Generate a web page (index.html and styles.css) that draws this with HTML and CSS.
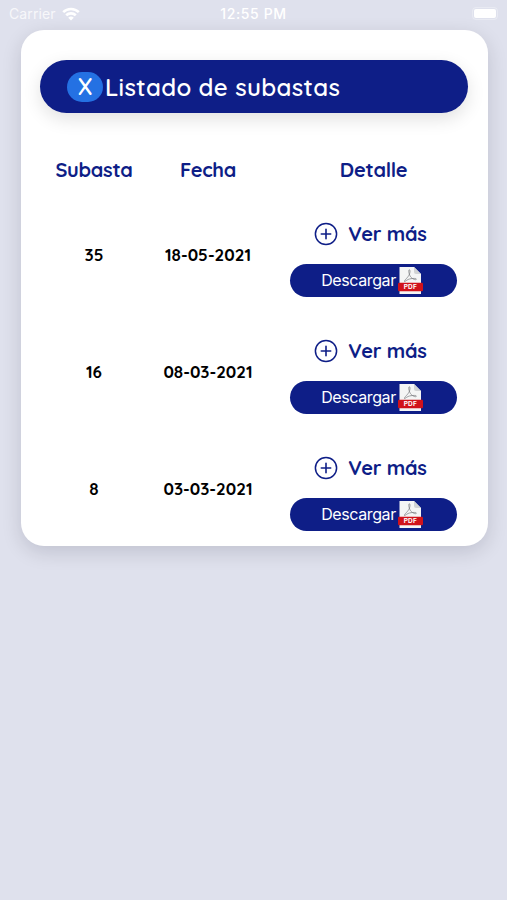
FILE: index.html
```html
<!DOCTYPE html>
<html lang="es">
<head>
    <meta charset="UTF-8">
    <meta name="viewport" content="width=device-width, initial-scale=1">
    <title>Listado de subastas</title>
    <link rel="stylesheet" href="styles.css">
</head>
<body>

<!-- iconos compartidos por todas las filas -->
<svg class="sprites">
    <symbol id="icon-plus" viewBox="0 0 24 24">
        <circle cx="12" cy="12" r="10.6" fill="none" stroke="currentColor" stroke-width="1.5"/>
        <path d="M12 7.300v9.400M7.300 12h9.400" fill="none" stroke="currentColor" stroke-width="1.6" stroke-linecap="round"/>
    </symbol>
    <symbol id="icon-pdf" viewBox="0 0 25 27">
        <path d="M1.500 0h14.500l7 7V27H1.500z" fill="#f4f5f5"/>
        <path d="M16 0l7 7h-5q-2 0-2-2z" fill="#d0d2d4"/>
        <path d="M6.500 14.500c-.5-1.500 3.500-3.500 5-7.500.8-2.300.6-4.300-.2-4.300-1 0-.6 3.800 1 6.600 1.400 2.500 5.400 4.200 6 3 .5-1.300-5.200-1.100-8.200.2-2 .8-3.200 2.400-3.600 2z" fill="none" stroke="#77797c" stroke-width=".7"/>
        <rect x="0" y="15.800" width="25" height="8.400" rx="1.200" fill="#d0121b"/>
        <text x="12.300" y="22.400" class="pdf-text" text-anchor="middle">PDF</text>
    </symbol>
</svg>

<div class="status-bar">
    <div class="carrier">
        <span>Carrier</span>
        <svg class="wifi" viewBox="0 0 18 14">
            <path d="M1.200 5.200c4.300-4.300 11.300-4.300 15.600 0M4.200 8.300c2.700-2.600 6.900-2.600 9.600 0" fill="none" stroke="#fff" stroke-width="2.600"/>
            <path d="M9 13.600l-2.800-2.900q2.800-2.200 5.600 0z" fill="#fff"/>
        </svg>
    </div>
    <div class="time">12:55 PM</div>
    <div class="battery"><span></span></div>
</div>

<div class="card">
    <div class="title-bar">
        <button class="close">X</button>
        <h1>Listado de subastas</h1>
    </div>

    <table>
        <thead>
        <tr>
            <th class="col-subasta">Subasta</th>
            <th class="col-fecha">Fecha</th>
            <th class="col-detalle">Detalle</th>
        </tr>
        </thead>
        <tbody>
        <tr>
            <td>35</td>
            <td>18-05-2021</td>
            <td class="col-detalle">
                <a class="more"><svg><use href="#icon-plus"/></svg><span>Ver más</span></a>
                <button class="download"><span>Descargar</span><svg><use href="#icon-pdf"/></svg></button>
            </td>
        </tr>
        <tr>
            <td>16</td>
            <td>08-03-2021</td>
            <td class="col-detalle">
                <a class="more"><svg><use href="#icon-plus"/></svg><span>Ver más</span></a>
                <button class="download"><span>Descargar</span><svg><use href="#icon-pdf"/></svg></button>
            </td>
        </tr>
        <tr>
            <td>8</td>
            <td>03-03-2021</td>
            <td class="col-detalle">
                <a class="more"><svg><use href="#icon-plus"/></svg><span>Ver más</span></a>
                <button class="download"><span>Descargar</span><svg><use href="#icon-pdf"/></svg></button>
            </td>
        </tr>
        </tbody>
    </table>
</div>

</body>
</html>
```

FILE: styles.css
```css
* {
    box-sizing: border-box;
}

body {
    margin: 0;
    min-height: 900px;
    background-color: #dfe1ed;
    font-family: Quicksand, Lato, sans-serif;
    color: #0e1e87;
}

.sprites {
    display: none;
}

.status-bar {
    display: grid;
    grid-template-columns: 1fr auto 1fr;
    align-items: center;
    height: 30px;
    padding: 0 9px 3px 9px;
    font-family: Inter, sans-serif;
    font-size: 14px;
    color: #fff;
}

.carrier {
    display: flex;
    align-items: center;
    gap: 6px;
    letter-spacing: 0.1px;
}

.carrier span {
    opacity: 0.75;
}

.wifi {
    width: 18px;
    height: 14px;
}

.time {
    font-weight: 500;
    letter-spacing: 0.6px;
}

.battery {
    justify-self: end;
    padding: 1px;
    border: 1px solid rgba(255, 255, 255, 0.3);
    border-radius: 4px;
}

.battery span {
    display: block;
    width: 22px;
    height: 9px;
    border-radius: 2px;
    background-color: #fff;
}

.card {
    width: 467px;
    height: 516px;
    margin: 0 19px 0 21px;
    padding: 30px 20px 0 19px;
    border-radius: 23px;
    background-color: #fff;
    box-shadow: 0 6px 20px rgba(0, 0, 30, 0.14);
}

.title-bar {
    display: flex;
    align-items: center;
    gap: 2px;
    height: 53px;
    padding-left: 27px;
    border-radius: 27px;
    background-color: #0e1e87;
    box-shadow: 0 6px 18px rgba(0, 0, 0, 0.12);
    color: #fff;
}

.title-bar h1 {
    margin: 0;
    font-size: 24px;
    font-weight: 600;
    letter-spacing: 0.35px;
    white-space: nowrap;
}

button {
    border: none;
    color: #fff;
}

.close {
    width: 36px;
    height: 30px;
    padding: 0 0 2px;
    border-radius: 15px;
    background-color: #2471e3;
    font-family: inherit;
    font-size: 23px;
    font-weight: 600;
}

table {
    width: 427px;
    margin-top: 29px;
    border-collapse: collapse;
    table-layout: fixed;
    text-align: center;
}

th {
    height: 54px;
    padding: 0 0 0 1px;
    font-size: 20px;
    font-weight: 700;
    letter-spacing: -0.3px;
}

.col-subasta {
    width: 107px;
}

.col-fecha {
    width: 121px;
}

td {
    height: 117px;
    padding: 0 0 0 1px;
    font-size: 17px;
    font-weight: 700;
    color: #000;
}

.col-detalle {
    padding-left: 12px;
}

td.col-detalle {
    padding-top: 9px;
}

.more {
    display: flex;
    align-items: center;
    justify-content: center;
    gap: 10px;
    height: 26px;
    margin: 0 6px 17px 0;
    font-size: 20px;
    font-weight: 700;
    letter-spacing: -0.2px;
    color: #0e1e87;
}

.more span {
    padding-bottom: 1px;
}

.more svg {
    width: 24px;
    height: 24px;
}

.download {
    display: flex;
    align-items: center;
    justify-content: center;
    gap: 2px;
    width: 167px;
    height: 33px;
    margin: 0 auto;
    padding: 0 3px 0 0;
    border-radius: 17px;
    background-color: #0e1e87;
    font-family: Inter, sans-serif;
    font-size: 16px;
    letter-spacing: -0.4px;
}

.download span {
    padding-bottom: 2px;
}

.download svg {
    width: 25px;
    height: 27px;
}

.pdf-text {
    font-family: Inter, sans-serif;
    font-size: 6.5px;
    font-weight: 700;
    letter-spacing: 0.2px;
    fill: #fff;
}
```
